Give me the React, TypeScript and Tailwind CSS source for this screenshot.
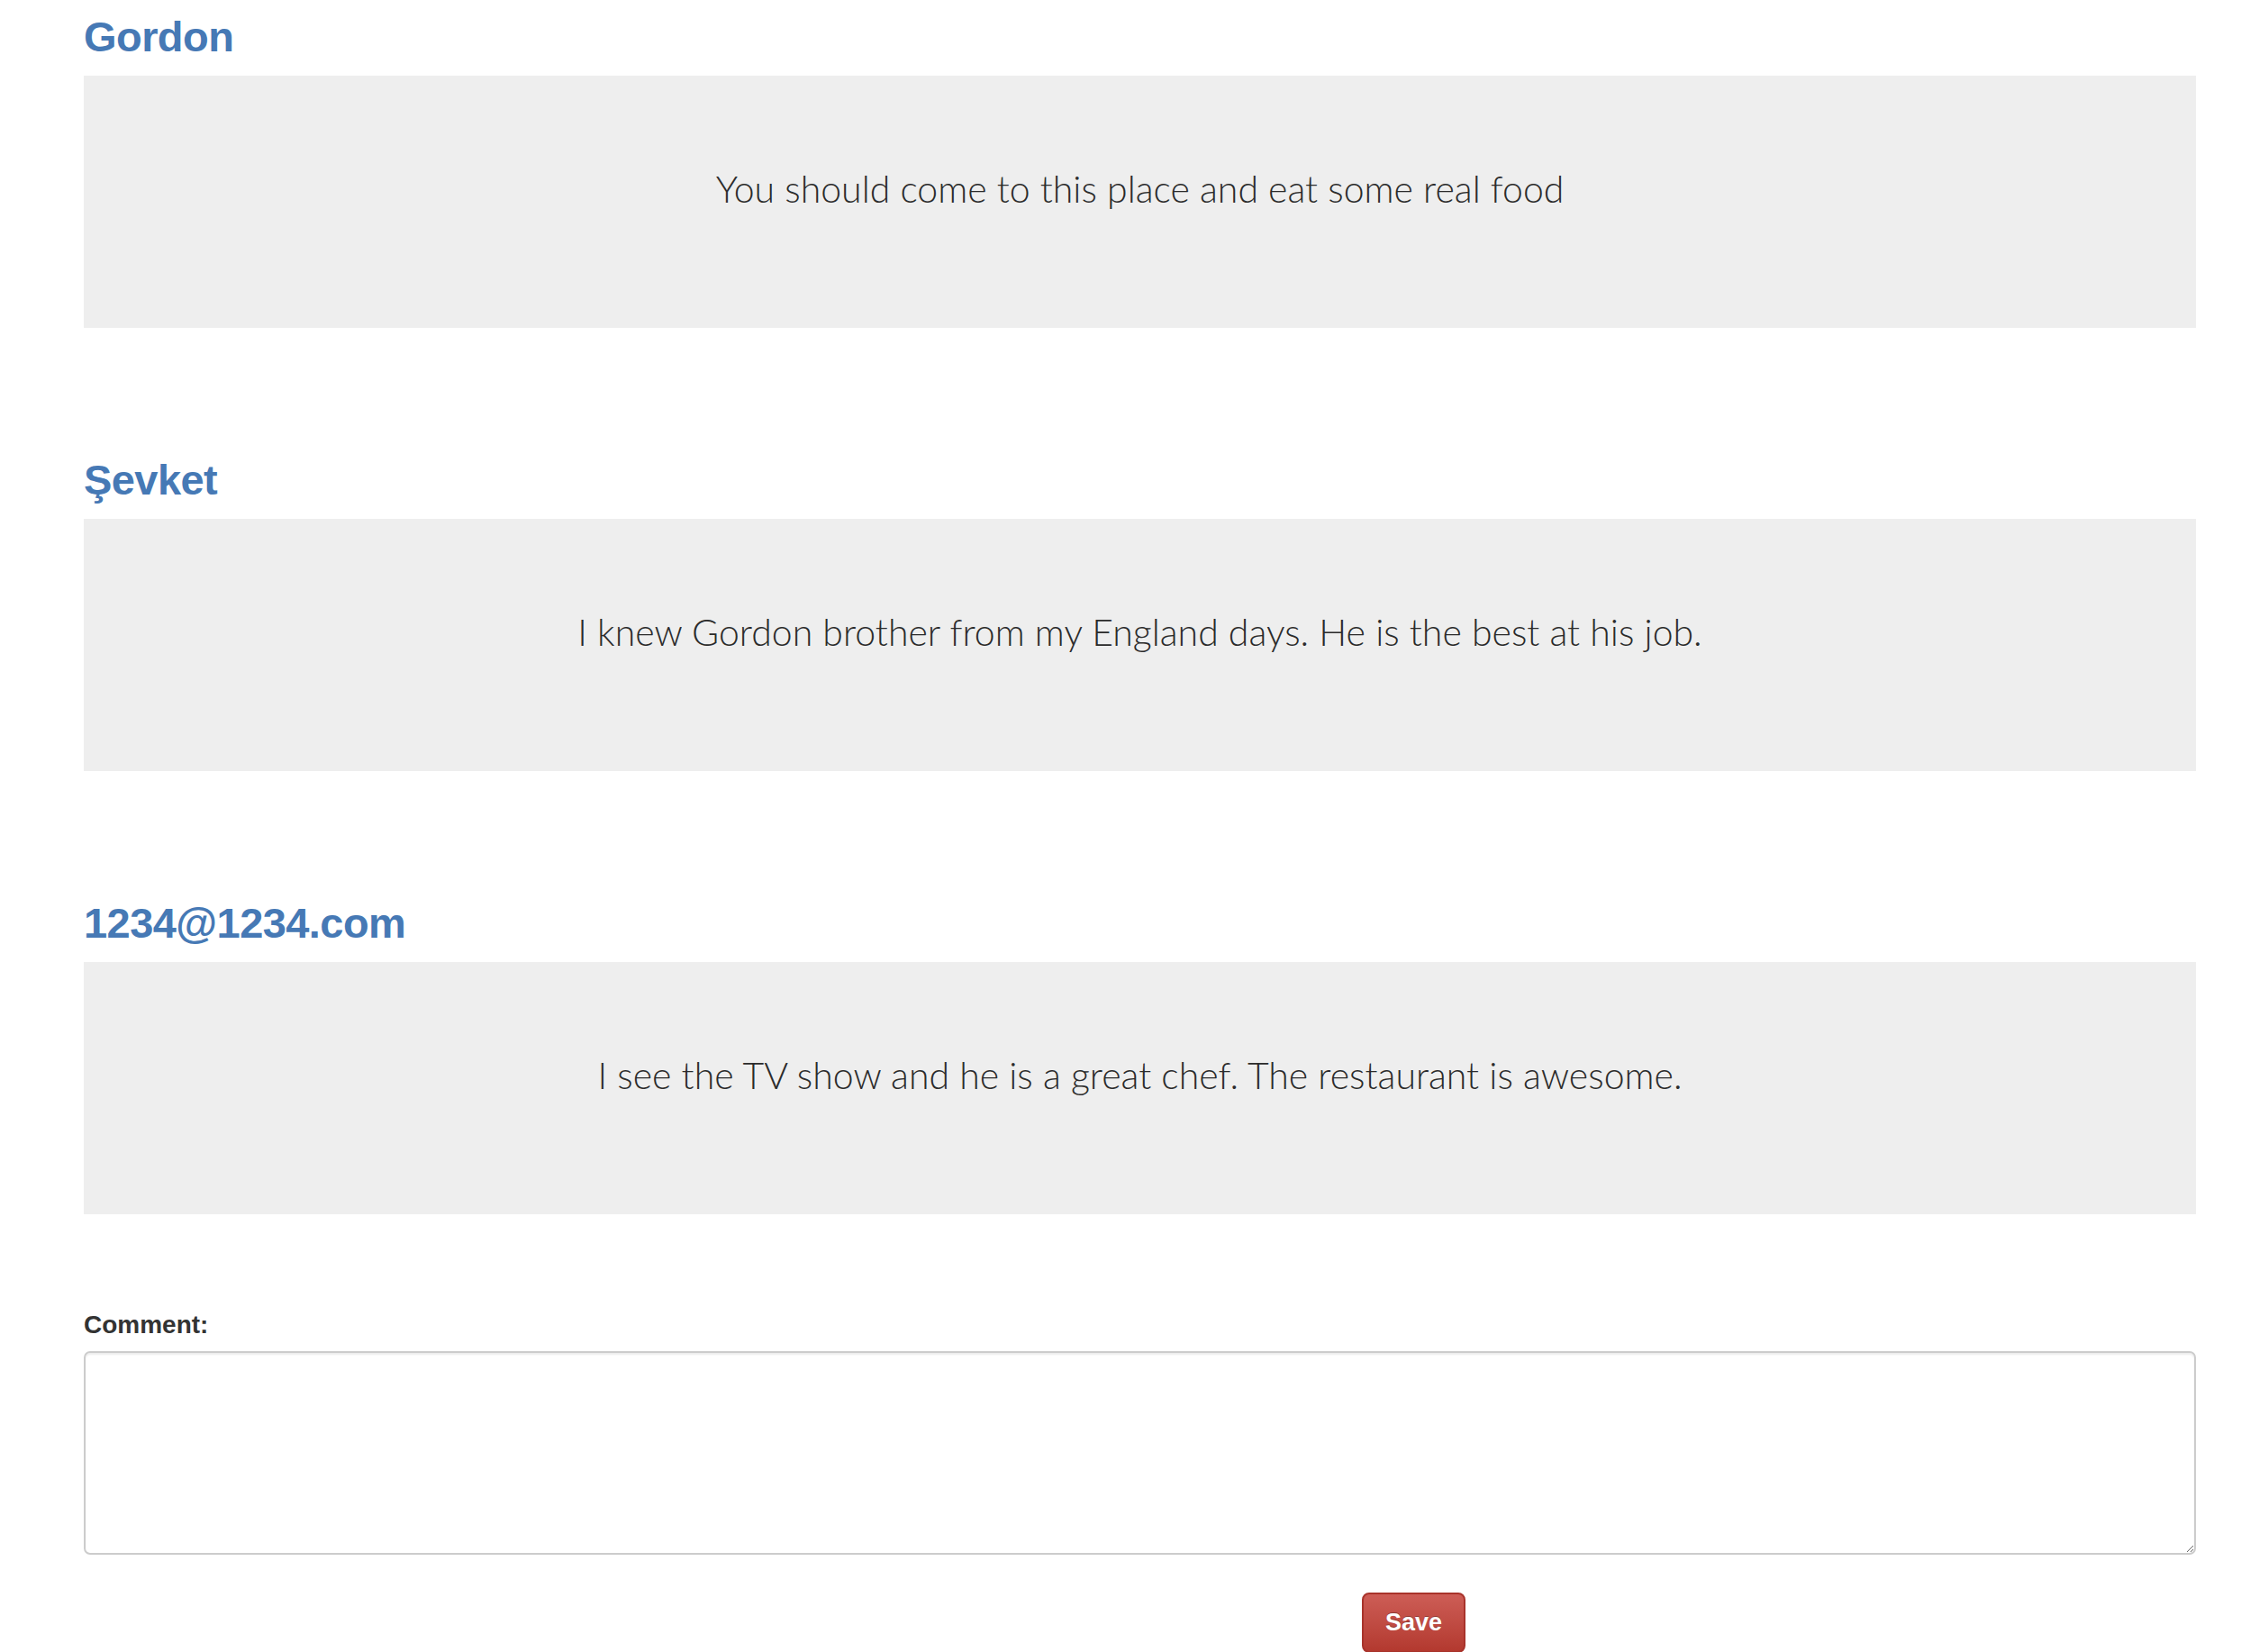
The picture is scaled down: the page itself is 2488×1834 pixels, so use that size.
import React, { useState } from 'react';

interface Review {
  id: number;
  author: string;
  text: string;
}

const reviews: Review[] = [
  { id: 1, author: 'Gordon', text: 'You should come to this place and eat some real food' },
  { id: 2, author: 'Şevket', text: 'I knew Gordon brother from my England days. He is the best at his job.' },
  { id: 3, author: '1234@1234.com', text: 'I see the TV show and he is a great chef. The restaurant is awesome.' },
];

const ReviewBlock: React.FC<{ review: Review }> = ({ review }) => (
  <div>
    <h3 className="pt-[15px] mb-[17px] text-[47px] leading-[52px] font-bold tracking-[-0.012em] text-[#4679b5] font-['Liberation_Sans',Arial,sans-serif]">
      {review.author}
    </h3>
    <div className="h-[280px] bg-[#eeeeee] pt-[104px] text-center">
      <p className="text-[41px] leading-[44px] font-light text-[#2b2b2b] font-['Lato','Liberation_Sans',Arial,sans-serif]">
        {review.text}
      </p>
    </div>
  </div>
);

const App: React.FC = () => {
  const [comment, setComment] = useState('');

  return (
    <div className="min-h-screen bg-white pl-[93px] pr-[50px] font-['Liberation_Sans',Arial,sans-serif]">
      <div className="flex flex-col gap-[128px]">
        {reviews.map(r => (
          <ReviewBlock key={r.id} review={r} />
        ))}
      </div>
      <form className="mt-[107px]" onSubmit={e => e.preventDefault()}>
        <label className="block text-[28px] leading-[32px] font-bold text-[#333333]">Comment:</label>
        <textarea
          value={comment}
          onChange={e => setComment(e.target.value)}
          className="mt-[13px] block w-full h-[226px] rounded-[7px] border-2 border-[#cccccc] bg-white shadow-[inset_0_2px_2px_rgba(0,0,0,0.075)] px-3 py-2 text-[26px] text-[#555555] outline-none"
        />
        <button
          type="submit"
          className="mt-[42px] ml-[1419px] w-[115px] h-[67px] rounded-[8px] border-2 border-[#a8332b] bg-gradient-to-b from-[#cd5d56] to-[#b3392f] text-[27px] font-bold text-white [text-shadow:0_-1px_0_rgba(0,0,0,0.3)]"
        >
          Save
        </button>
      </form>
    </div>
  );
};

export default App;
